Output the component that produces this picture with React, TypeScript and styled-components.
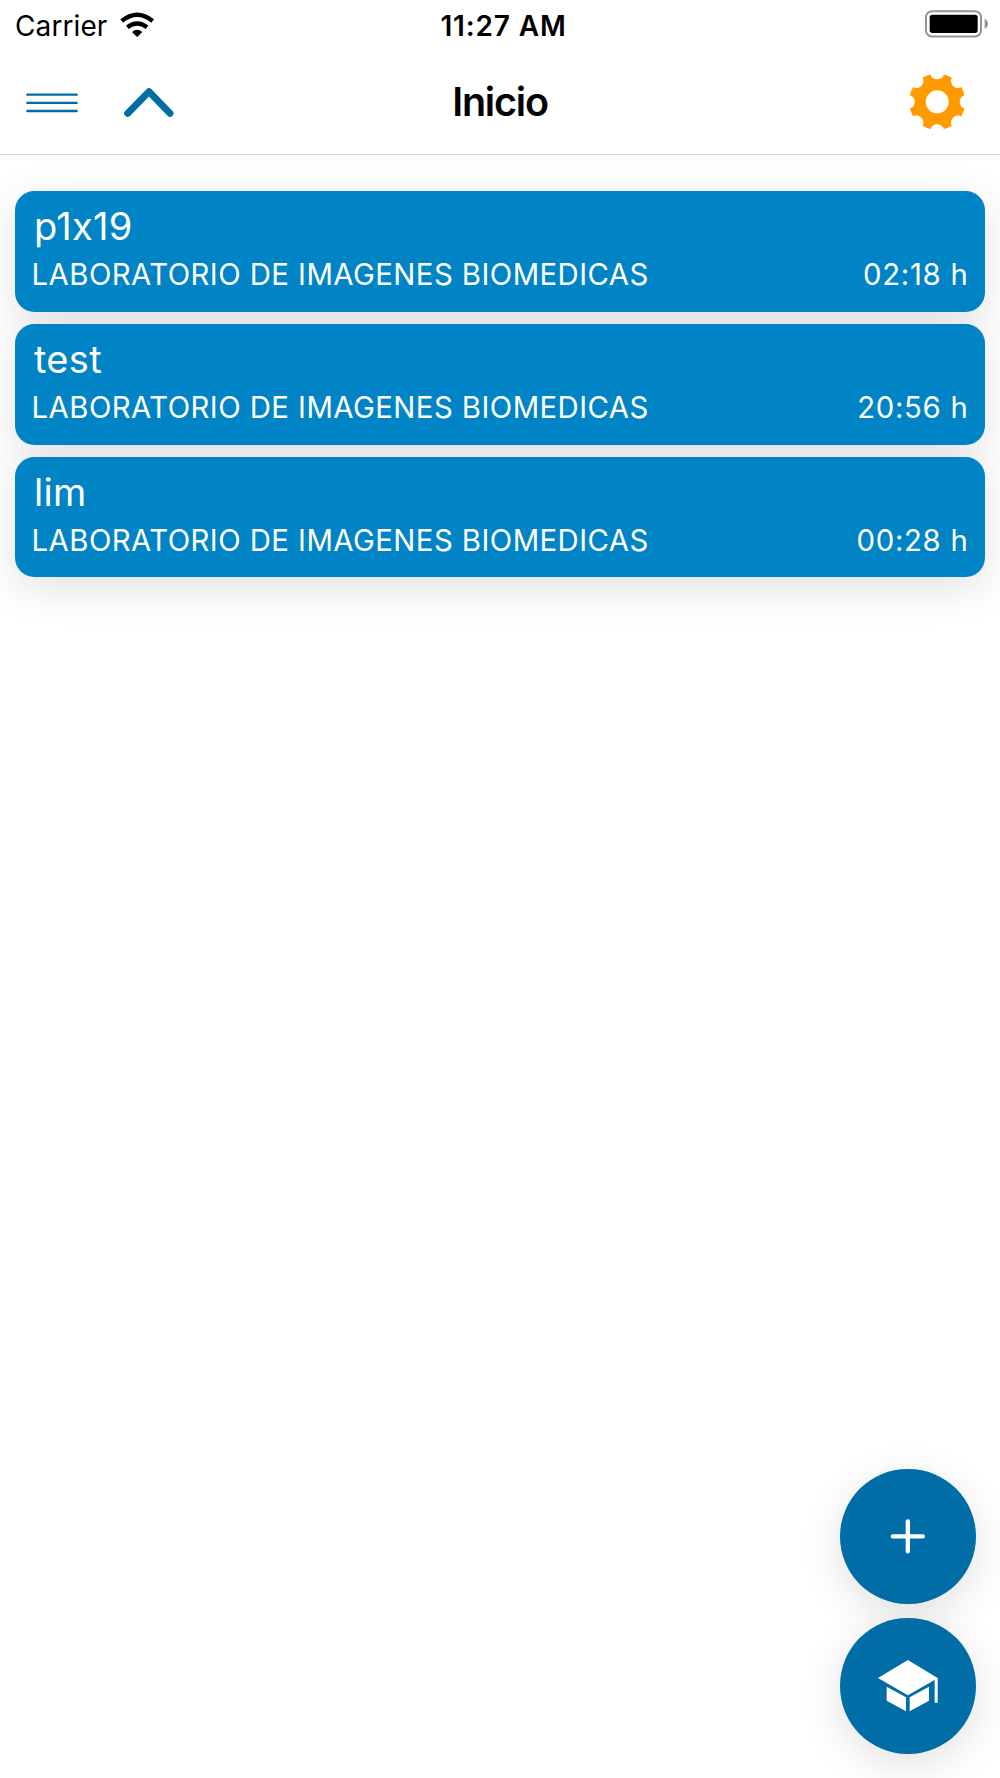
import React from "react";
import styled, { createGlobalStyle } from "styled-components";

const GlobalStyle = createGlobalStyle`
  * { box-sizing: border-box; }
  html, body { margin: 0; padding: 0; background: #fff; }
  body { font-family: Inter, "Liberation Sans", sans-serif; color: #000; }
  svg { display: block; flex: none; }
`;

const Screen = styled.div`
  display: flex;
  flex-direction: column;
  width: 1000px;
  height: 1778px;
  overflow: hidden;
  background: #fff;
`;

const StatusBar = styled.div`
  display: grid;
  grid-template-columns: 1fr auto 1fr;
  align-items: center;
  height: 50px;
  padding: 0 12px 0 15px;
  font-size: 28px;
  line-height: 52px;
`;

const Carrier = styled.div`
  display: flex;
  align-items: center;
  gap: 13px;
  letter-spacing: 0.1px;

  svg { margin-top: -4px; }
`;

const Clock = styled.div`
  padding-left: 4px;
  font-weight: 600;
  font-size: 28px;
  letter-spacing: 0.85px;
`;

const BatterySlot = styled.div`
  display: flex;
  justify-content: flex-end;

  svg { margin-top: -4px; }
`;

const Toolbar = styled.header`
  display: grid;
  grid-template-columns: 1fr auto 1fr;
  align-items: center;
  height: 105px;
  padding: 0 34px 0 26px;
  border-bottom: 1px solid #d3d3d3;
`;

const ToolbarButtons = styled.div<{ $end?: boolean }>`
  display: flex;
  align-items: center;
  gap: 46px;
  justify-content: ${(p) => (p.$end ? "flex-end" : "flex-start")};
`;

const IconButton = styled.button`
  display: flex;
  padding: 0;
  border: 0;
  background: none;
`;

const Title = styled.h1`
  margin: 0;
  padding-left: 8px;
  font-size: 39.5px;
  line-height: 48px;
  font-weight: 600;
  letter-spacing: -1.2px;
`;

const List = styled.main`
  display: flex;
  flex-direction: column;
  gap: 12px;
  padding: 36px 14.6px 0;
`;

const Card = styled.article`
  height: 120.8px;
  padding: 11.2px 17px 0;
  border-radius: 19.5px;
  background: #0084c6;
  color: #fff;
  box-shadow: 0 10.7px 42.7px rgba(0, 0, 0, 0.12);
`;

const CardTitle = styled.h2`
  margin: 0 0 0.8px;
  padding-left: 2.4px;
  font-size: 38px;
  line-height: 48px;
  font-weight: 400;
  letter-spacing: 0.3px;
  font-feature-settings: "calt" 0;
`;

const CardRow = styled.div`
  display: flex;
  justify-content: space-between;
  font-size: 29.3px;
  line-height: 48px;
`;

const Place = styled.span`
  letter-spacing: 0.45px;
`;

const Duration = styled.span`
  letter-spacing: 0.7px;
`;

const Actions = styled.nav`
  display: flex;
  flex-direction: column;
  align-items: flex-end;
  gap: 14.3px;
  margin-top: auto;
  padding: 0 24.4px 24.4px 0;
`;

const Fab = styled.button`
  display: flex;
  width: 135.2px;
  height: 135.4px;
  padding: 0;
  border: 0;
  border-radius: 50%;
  background: #006da7;
  box-shadow: 0 10.7px 42.7px rgba(0, 0, 0, 0.12);
`;

const WifiIcon = () => (
  <svg width="34" height="25" viewBox="362 34 102 75">
    <g fill="none" stroke="#000" strokeWidth="13">
      <path d="M367 61Q413.500 24 460 61" />
      <path d="M384 79.500Q413.500 57 443 79.500" />
    </g>
    <path d="M413.500 109L398 94Q413.500 80 429 94Z" />
  </svg>
);

const BatteryIcon = () => (
  <svg width="63" height="28" viewBox="195 31 189 84">
    <rect x="198" y="34.500" width="165" height="76" rx="18" fill="none" stroke="#949494" strokeWidth="6" />
    <rect x="209" y="45" width="144" height="55" rx="8" />
    <path d="M374 57Q384 63 384 72.500T374 88Z" fill="#949494" />
  </svg>
);

const MenuIcon = () => (
  <svg width="52" height="21" viewBox="78 276 156 63">
    <g stroke="#006da7" strokeWidth="7" strokeLinecap="round">
      <path d="M82 284H230M82 308.500H230M82 333H230" />
    </g>
  </svg>
);

const ChevronUpIcon = () => (
  <svg width="50" height="30" viewBox="371 261 150 90">
    <path d="M382 340L446 275L509 340" fill="none" stroke="#006da7" strokeWidth="21" strokeLinecap="round" strokeLinejoin="round" />
  </svg>
);

const toothPoint = (deg: number) => {
  const a = (deg * Math.PI) / 180;
  return `${(28.1 * Math.sin(a)).toFixed(2)} ${(-28.1 * Math.cos(a)).toFixed(2)}`;
};

const gearPath =
  `M${toothPoint(-13.5)}` +
  Array.from({ length: 8 }, (_, i) => {
    const c = i * 45;
    return `A6.600 5.400 ${c} 0 0 ${toothPoint(c + 13.5)}A28.100 28.100 0 0 1 ${toothPoint(c + 31.5)}`;
  }).join("") +
  "ZM11.500 0A11.500 11.500 0 1 0 -11.500 0A11.500 11.500 0 1 0 11.500 0Z";

const GearIcon = () => (
  <svg width="58" height="58" viewBox="-29.200 -28.800 58 58">
    <path d={gearPath} fill="#ff9b00" fillRule="evenodd" />
  </svg>
);

const PlusIcon = () => (
  <svg width="135" height="135" viewBox="61 57 405 405">
    <path d="M264.500 214V304M219.500 259H309.500" stroke="#fff" strokeWidth="13" strokeLinecap="round" />
  </svg>
);

const GraduationIcon = () => (
  <svg width="135" height="135" viewBox="61 54 405 405" fill="#fff">
    <path d="M175 234L264.500 180L354 234V308H345V240L264.500 286Z" />
    <path d="M201 260L259 292V334L201 302Z" />
    <path d="M270 292L328 260V302L270 334Z" />
  </svg>
);

const sessions = [
  { name: "p1x19", place: "LABORATORIO DE IMAGENES BIOMEDICAS", time: "02:18 h" },
  { name: "test", place: "LABORATORIO DE IMAGENES BIOMEDICAS", time: "20:56 h" },
  { name: "lim", place: "LABORATORIO DE IMAGENES BIOMEDICAS", time: "00:28 h" },
];

export default function App() {
  return (
    <Screen>
      <GlobalStyle />
      <StatusBar>
        <Carrier>
          <span>Carrier</span>
          <WifiIcon />
        </Carrier>
        <Clock>11:27 AM</Clock>
        <BatterySlot>
          <BatteryIcon />
        </BatterySlot>
      </StatusBar>
      <Toolbar>
        <ToolbarButtons>
          <IconButton><MenuIcon /></IconButton>
          <IconButton><ChevronUpIcon /></IconButton>
        </ToolbarButtons>
        <Title>Inicio</Title>
        <ToolbarButtons $end>
          <IconButton><GearIcon /></IconButton>
        </ToolbarButtons>
      </Toolbar>
      <List>
        {sessions.map((s) => (
          <Card key={s.name}>
            <CardTitle>{s.name}</CardTitle>
            <CardRow>
              <Place>{s.place}</Place>
              <Duration>{s.time}</Duration>
            </CardRow>
          </Card>
        ))}
      </List>
      <Actions>
        <Fab><PlusIcon /></Fab>
        <Fab><GraduationIcon /></Fab>
      </Actions>
    </Screen>
  );
}
